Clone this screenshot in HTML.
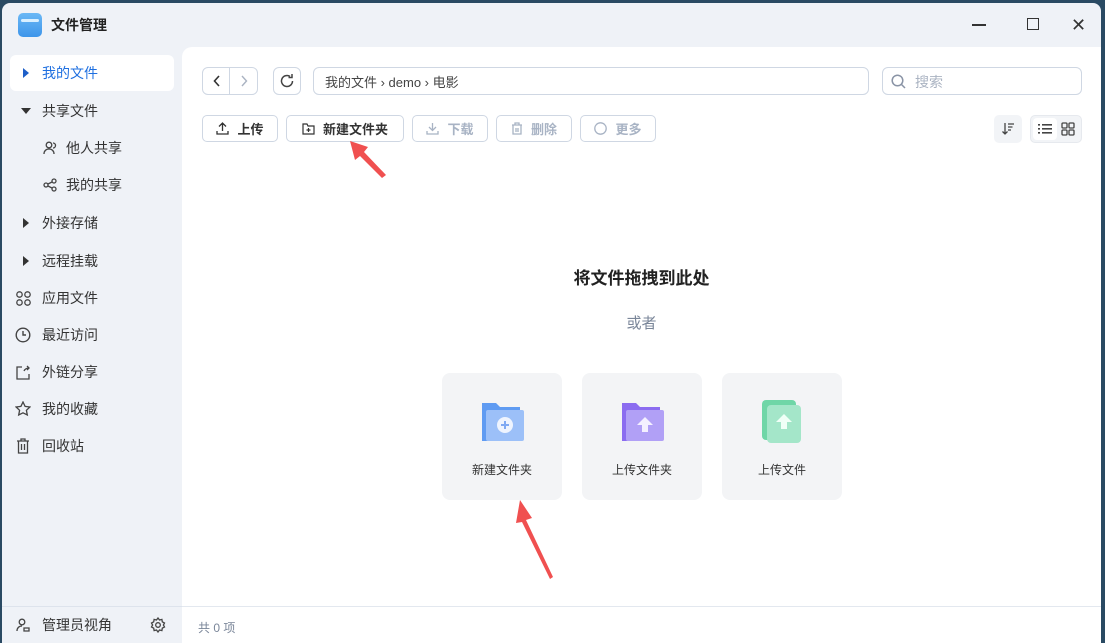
<!DOCTYPE html>
<html><head><meta charset="utf-8"><style>
*{box-sizing:border-box;margin:0;padding:0}
body{width:1105px;height:641px;overflow:hidden;background:#2a4a63;font-family:"Liberation Sans","Noto Sans CJK SC",sans-serif;position:relative;color:#333}
.win{position:absolute;left:2px;top:3px;width:1099px;height:640px;background:#eff2f7;border-radius:8px 8px 0 0;overflow:hidden}
.abs{position:absolute}
.title{left:16px;top:10px;font-size:14px;font-weight:bold;color:#222;display:flex;align-items:center;gap:9px}
.logo{width:24px;height:24px;border-radius:5px;background:linear-gradient(#6bb8f5,#3d95ea);position:relative}
.logo:after{content:"";position:absolute;left:3px;top:6px;width:18px;height:3px;background:#d9efff;border-radius:2px}
.nav{position:absolute;left:8px;width:164px;height:36px;display:flex;align-items:center;font-size:14px;color:#333}
.nav .ic{width:16px;margin-left:8px;display:flex;justify-content:center;align-items:center}
.nav span{margin-left:8px}
.nav.i .ic{width:22px;margin-left:10px}
.nav.s .ic{margin-left:32px}
.sel{background:#fff;border-radius:6px;color:#1e6fe0}
.main{position:absolute;left:180px;top:44px;width:919px;height:600px;background:#fff;border-radius:10px 0 0 0}
.btn{position:absolute;height:27px;border:1px solid #cfd7e3;border-radius:5px;font-size:13px;display:flex;align-items:center;justify-content:center;gap:8px;font-weight:bold;color:#333}
.dis{color:#a8b3c4}
.card{position:absolute;top:326px;width:120px;height:127px;background:#f3f4f6;border-radius:8px;text-align:center;font-size:12px;color:#333}
.card .t{position:absolute;top:88px;width:100%}
svg{display:block}
</style></head><body>
<div class="win">
<div class="abs title"><div class="logo"></div>文件管理</div>
<div class="abs" style="left:970px;top:21px;width:14px;height:1.5px;background:#333"></div>
<div class="abs" style="left:1025px;top:15px;width:12px;height:12px;border:1.5px solid #333"></div>
<div class="abs" style="left:1069px;top:12px;font-size:18px;color:#333">✕</div>

<div class="nav sel" style="top:52px"><div class="ic"><svg width="8" height="10"><path d="M1 0L7 5L1 10Z" fill="#1e5fc8"/></svg></div><span>我的文件</span></div>
<div class="nav" style="top:90px"><div class="ic"><svg width="10" height="8"><path d="M0 1H10L5 7Z" fill="#333"/></svg></div><span>共享文件</span></div>
<div class="nav s" style="top:127px"><div class="ic"><svg width="14" height="14" fill="none" stroke="#444" stroke-width="1.3"><circle cx="6" cy="4" r="2.8"/><path d="M1 13c0-3 2-5 5-5s5 2 5 5M10 2a2.5 2.5 0 010 5"/></svg></div><span>他人共享</span></div>
<div class="nav s" style="top:164px"><div class="ic"><svg width="14" height="14" fill="none" stroke="#444" stroke-width="1.3"><circle cx="11" cy="3" r="2"/><circle cx="3" cy="7" r="2"/><circle cx="11" cy="11" r="2"/><path d="M5 6l4-2M5 8l4 2"/></svg></div><span>我的共享</span></div>
<div class="nav" style="top:202px"><div class="ic"><svg width="8" height="10"><path d="M1 0L7 5L1 10Z" fill="#333"/></svg></div><span>外接存储</span></div>
<div class="nav" style="top:240px"><div class="ic"><svg width="8" height="10"><path d="M1 0L7 5L1 10Z" fill="#333"/></svg></div><span>远程挂载</span></div>
<div class="nav i" style="top:277px;left:0"><div class="ic"><svg width="15" height="15" fill="none" stroke="#444" stroke-width="1.3"><circle cx="3.5" cy="3.5" r="2.7"/><circle cx="11.5" cy="3.5" r="2.7"/><circle cx="3.5" cy="11.5" r="2.7"/><circle cx="11.5" cy="11.5" r="2.7"/></svg></div><span>应用文件</span></div>
<div class="nav i" style="top:314px;left:0"><div class="ic"><svg width="16" height="16" fill="none" stroke="#444" stroke-width="1.4"><circle cx="8" cy="8" r="6.8"/><path d="M8 4v4h3"/></svg></div><span>最近访问</span></div>
<div class="nav i" style="top:351px;left:0"><div class="ic"><svg width="15" height="15" fill="none" stroke="#444" stroke-width="1.3"><path d="M6 2H1v12h12V9M8 6c1-2 3-3 5-3M11 1l2 2-2 2"/></svg></div><span>外链分享</span></div>
<div class="nav i" style="top:388px;left:0"><div class="ic"><svg width="16" height="16" fill="none" stroke="#444" stroke-width="1.3"><path d="M8 1l2.1 4.4 4.8.6-3.5 3.3.9 4.7L8 11.8 3.7 14l.9-4.7L1.1 6l4.8-.6z"/></svg></div><span>我的收藏</span></div>
<div class="nav i" style="top:425px;left:0"><div class="ic"><svg width="14" height="16" fill="none" stroke="#444" stroke-width="1.3"><path d="M1 3h12M5 3V1h4v2M2.5 3v12h9V3M5.5 6v6M8.5 6v6"/></svg></div><span>回收站</span></div>
<div class="abs" style="left:0;top:603px;width:180px;border-top:1px solid #dde3ec"></div>
<div class="nav i" style="top:604px;left:0"><div class="ic"><svg width="14" height="14" fill="none" stroke="#444" stroke-width="1.3"><circle cx="6" cy="4" r="2.8"/><path d="M1 13c0-3 2-5 5-5M8 10h5v3H8z"/></svg></div><span>管理员视角</span></div>
<div class="abs" style="left:148px;top:614px"><svg width="16" height="16" fill="none" stroke="#444" stroke-width="1.3"><circle cx="8" cy="8" r="2.3"/><path d="M8 1l1.5 2 2.4-.6.4 2.4 2.2 1.2-1.1 2 1.1 2-2.2 1.2-.4 2.4-2.4-.6L8 15l-1.5-2-2.4.6-.4-2.4L1.5 10l1.1-2-1.1-2 2.2-1.2.4-2.4 2.4.6z"/></svg></div>

<div class="main">
 <div class="abs" style="left:20px;top:20px;width:56px;height:28px;border:1px solid #cfd7e3;border-radius:6px"></div>
 <div class="abs" style="left:47px;top:21px;width:1px;height:26px;background:#cfd7e3"></div>
 <div class="abs" style="left:31px;top:28px"><svg width="8" height="12" fill="none" stroke="#333" stroke-width="1.6"><path d="M6 1L1.5 6 6 11"/></svg></div>
 <div class="abs" style="left:58px;top:28px"><svg width="8" height="12" fill="none" stroke="#aab3c2" stroke-width="1.4"><path d="M2 1l4.5 5L2 11"/></svg></div>
 <div class="abs" style="left:91px;top:20px;width:28px;height:28px;border:1px solid #cfd7e3;border-radius:6px"></div>
 <div class="abs" style="left:97px;top:26px"><svg width="16" height="16" fill="none" stroke="#444" stroke-width="1.5"><path d="M13.5 8A5.5 5.5 0 1111 3.4M13 1v3.5H9.5"/></svg></div>
 <div class="abs" style="left:131px;top:20px;width:556px;height:28px;border:1px solid #cfd7e3;border-radius:6px;font-size:13px;color:#444;padding:4px 11px">我的文件 › demo › 电影</div>
 <div class="abs" style="left:700px;top:20px;width:200px;height:28px;border:1px solid #cfd7e3;border-radius:6px;font-size:14px;color:#aab3c2;padding:4px 0 0 32px">搜索</div>
 <div class="abs" style="left:709px;top:27px"><svg width="15" height="15" fill="none" stroke="#8a94a6" stroke-width="1.5"><circle cx="6.5" cy="6.5" r="5.3"/><path d="M10.5 10.5l3.5 3.5"/></svg></div>

 <div class="btn" style="left:20px;top:68px;width:76px"><svg width="13" height="13" fill="none" stroke="#333" stroke-width="1.3"><path d="M6.5 9V1.5M3 4.5l3.5-3.5 3.5 3.5M1 9v3h11V9"/></svg>上传</div>
 <div class="btn" style="left:104px;top:68px;width:118px"><svg width="13" height="12" fill="none" stroke="#333" stroke-width="1.2"><path d="M1 1h4l1 2h6v8H1z M6.5 5v4M4.5 7h4"/></svg>新建文件夹</div>
 <div class="btn dis" style="left:230px;top:68px;width:76px"><svg width="13" height="13" fill="none" stroke="#a8b3c4" stroke-width="1.3"><path d="M6.5 1v7.5M3 5l3.5 3.5L10 5M1 9v3h11V9"/></svg>下载</div>
 <div class="btn dis" style="left:314px;top:68px;width:76px"><svg width="12" height="13" fill="none" stroke="#a8b3c4" stroke-width="1.3"><path d="M1 3h10M4 3V1h4v2M2 3v9h8V3M5 6v4M7 6v4"/></svg>删除</div>
 <div class="btn dis" style="left:398px;top:68px;width:76px"><svg width="13" height="13" fill="none" stroke="#a8b3c4" stroke-width="1.3"><circle cx="6.5" cy="6.5" r="5.7"/></svg>更多</div>

 <div class="abs" style="left:812px;top:68px;width:28px;height:28px;background:#f2f4f7;border-radius:5px"></div>
 <div class="abs" style="left:820px;top:75px"><svg width="12" height="14" fill="none" stroke="#444" stroke-width="1.3"><path d="M3 1v11M0.5 9.5L3 12l2.5-2.5M6 2h6M6 5h4.5M6 8h3"/></svg></div>
 <div class="abs" style="left:848px;top:68px;width:52px;height:28px;background:#f2f4f7;border-radius:5px;border:1px solid #e6e9ee"></div>
 <div class="abs" style="left:851px;top:71px;width:24px;height:22px;background:#fff;border-radius:4px"></div>
 <div class="abs" style="left:856px;top:76px"><svg width="14" height="12" fill="#444"><rect x="0" y="1" width="2" height="1.6"/><rect x="0" y="5" width="2" height="1.6"/><rect x="0" y="9" width="2" height="1.6"/><rect x="4" y="1" width="10" height="1.6"/><rect x="4" y="5" width="10" height="1.6"/><rect x="4" y="9" width="10" height="1.6"/></svg></div>
 <div class="abs" style="left:879px;top:75px"><svg width="14" height="14" fill="none" stroke="#444" stroke-width="1.3"><rect x="1" y="1" width="5" height="5" rx="1"/><rect x="8" y="1" width="5" height="5" rx="1"/><rect x="1" y="8" width="5" height="5" rx="1"/><rect x="8" y="8" width="5" height="5" rx="1"/></svg></div>

 <div class="abs" style="left:0;width:919px;top:217px;text-align:center;font-size:17px;font-weight:bold;color:#222">将文件拖拽到此处</div>
 <div class="abs" style="left:0;width:919px;top:265px;text-align:center;font-size:15px;color:#7a8699">或者</div>

 <div class="card" style="left:260px">
  <svg class="abs" style="left:38px;top:28px" width="46" height="42"><path d="M2 2h14l4 4h20v34H2z" fill="#5f9bf2"/><rect x="6" y="9" width="38" height="31" rx="2" fill="#9cc0f8"/><circle cx="25" cy="24" r="8" fill="#eef4fe"/><path d="M25 20v8M21 24h8" stroke="#7fa9f3" stroke-width="2"/></svg>
  <div class="t">新建文件夹</div></div>
 <div class="card" style="left:400px">
  <svg class="abs" style="left:38px;top:28px" width="46" height="42"><path d="M2 2h14l4 4h20v34H2z" fill="#8b6cf0"/><rect x="6" y="9" width="38" height="31" rx="2" fill="#b1a0f6"/><path d="M25 16l8 8h-5v7h-6v-7h-5z" fill="#f4f0ff"/></svg>
  <div class="t">上传文件夹</div></div>
 <div class="card" style="left:540px">
  <svg class="abs" style="left:38px;top:27px" width="46" height="46"><rect x="2" y="0" width="34" height="40" rx="4" fill="#6fd6a7"/><rect x="7" y="5" width="34" height="38" rx="4" fill="#a4e6c9"/><path d="M24 14l8 8h-5v7h-6v-7h-5z" fill="#f0fff7"/></svg>
  <div class="t">上传文件</div></div>

 <div class="abs" style="left:0;top:559px;width:919px;border-top:1px solid #e3e8ef"></div>
 <div class="abs" style="left:16px;top:572px;font-size:12px;color:#7a8699">共 0 项</div>
</div>

<svg class="abs" style="left:0;top:0" width="1099" height="640">
 <path d="M348 138 L366 144 L362 149 L384 172 L380 175 L358 153 L353 157 Z" fill="#f05050"/>
 <path d="M518 497 L530 515 L524 517 L551 574 L548 576 L520 519 L514 520 Z" fill="#f05050"/>
</svg>
</div>
</body></html>
